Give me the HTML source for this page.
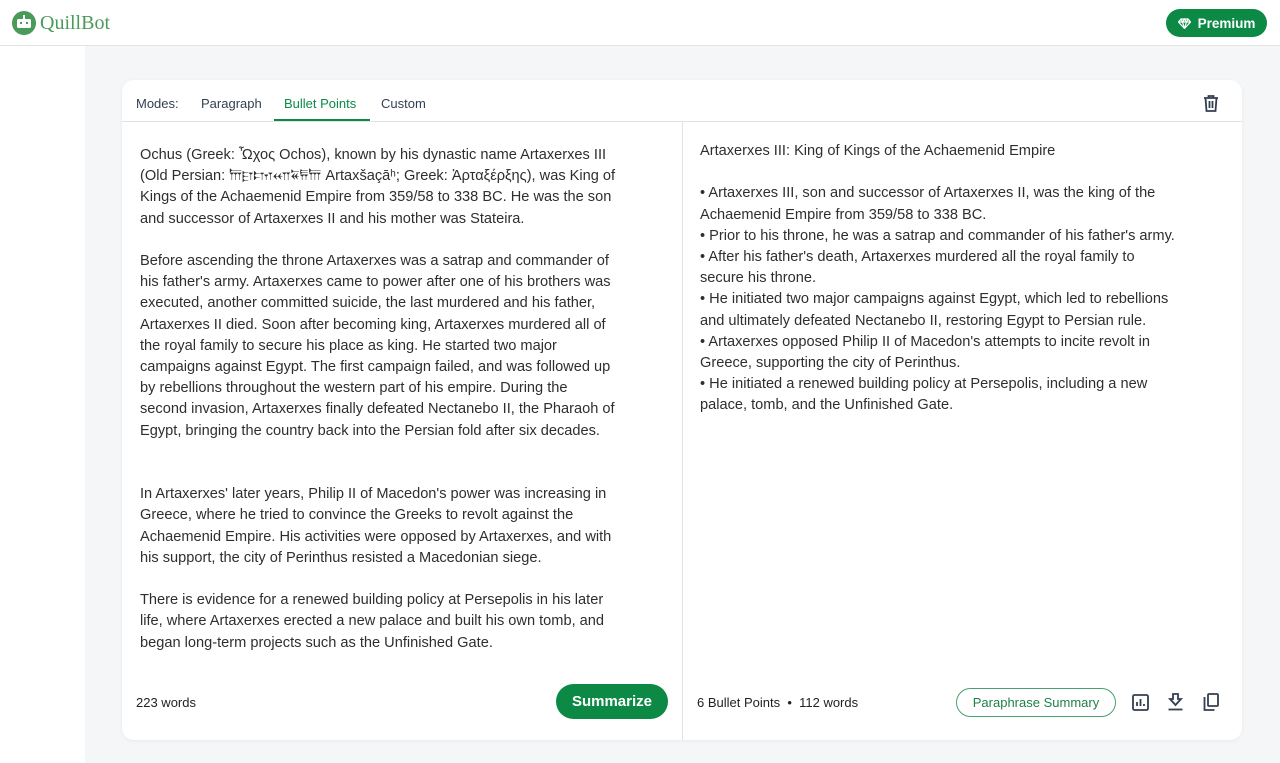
<!DOCTYPE html>
<html><head><meta charset="utf-8"><style>
*{box-sizing:border-box;margin:0;padding:0}
body{width:1280px;height:763px;overflow:hidden;background:#f5f6f7;font-family:"Liberation Sans","Noto Sans CJK SC",sans-serif;color:#2e2e2e;position:relative}
.hdr{position:absolute;left:0;top:0;width:1280px;height:46px;background:#fff;border-bottom:1px solid #e3e3e3}
.side{position:absolute;left:0;top:46px;width:85px;height:717px;background:#fff}
.logo{position:absolute;left:12px;top:11px;display:flex;align-items:center}
.logo span{font-family:"Liberation Serif",serif;font-size:20px;color:#4a9a5a;margin-left:4px}
.prem{position:absolute;left:1166px;top:9px;width:101px;height:28px;border-radius:14px;background:#0c8a45;color:#fff;font-size:13.5px;font-weight:bold;display:flex;align-items:center;justify-content:center;gap:7px}
.card{position:absolute;left:122px;top:80px;width:1120px;height:660px;background:#fff;border-radius:12px;box-shadow:0 1px 4px rgba(0,0,0,.05)}
.tabs{position:absolute;left:0;top:0;width:1120px;height:42px;border-bottom:1px solid #e3e3e3;font-size:13px;color:#333f50}
.tabs .t{position:absolute;top:16px}
.ul{position:absolute;left:152px;top:39px;width:96px;height:2px;background:#0c8a45}
.vl{position:absolute;left:560px;top:42px;width:1px;height:618px;background:#e3e3e3}
.txt{position:absolute;font-size:14.6px;line-height:21.2px;color:#2e2e2e;white-space:nowrap}
.foot{position:absolute;font-size:13px;color:#222}
.btn{position:absolute;left:434px;top:604px;width:112px;height:35px;border-radius:18px;background:#0c8a45;color:#fff;font-weight:bold;font-size:15px;display:flex;align-items:center;justify-content:center}
.pbtn{position:absolute;left:834px;top:608px;width:160px;height:29px;border-radius:15px;border:1.5px solid #4aa06f;color:#1f8048;font-size:13px;display:flex;align-items:center;justify-content:center}
</style></head><body>
<div class="hdr">
 <div class="logo"><svg width="24" height="24" viewBox="0 0 24 24"><circle cx="12" cy="12" r="12" fill="#4a9a5a"/><rect x="5" y="8" width="14" height="9" rx="1.5" fill="#fff"/><rect x="8" y="11" width="2" height="2" fill="#4a9a5a"/><rect x="14" y="11" width="2" height="2" fill="#4a9a5a"/><rect x="11" y="4" width="2" height="4" fill="#fff"/></svg><span>QuillBot</span></div>
 <div class="prem"><svg width="13" height="11" viewBox="0 0 13 11"><path d="M3 1h7l2.5 3L6.5 10.5 0.5 4z M0.5 4h12 M4.5 4l2 6.5 2-6.5 M3 1l1.5 3 2-3 2 3 1.5-3" fill="none" stroke="#fff" stroke-width="1.2"/></svg>Premium</div>
</div>
<div class="side"></div>
<div class="card">
 <div class="tabs">
  <div class="t" style="left:14px">Modes:</div>
  <div class="t" style="left:79px">Paragraph</div>
  <div class="t" style="left:162px;color:#0c8a45">Bullet Points</div>
  <div class="t" style="left:259px">Custom</div>
  <div class="ul"></div>
  <svg style="position:absolute;left:1081px;top:15px" width="16" height="17" viewBox="0 0 16 17"><path d="M1 3h14M5.5 3V1h5v2M2.5 3l1 13h9l1-13M6.5 6v7M9.5 6v7" fill="none" stroke="#333f50" stroke-width="1.8"/></svg>
 </div>
 <div class="vl"></div>
 <div class="txt" style="left:18px;top:65px">Ochus (Greek: Ὦχος Ochos), known by his dynastic name Artaxerxes III<br>(Old Persian: 𐎠𐎼𐎫𐎧𐏁𐏂𐎠 Artaxšaçāʰ; Greek: Ἀρταξέρξης), was King of<br>Kings of the Achaemenid Empire from 359/58 to 338 BC. He was the son<br>and successor of Artaxerxes II and his mother was Stateira.<br><br>Before ascending the throne Artaxerxes was a satrap and commander of<br>his father's army. Artaxerxes came to power after one of his brothers was<br>executed, another committed suicide, the last murdered and his father,<br>Artaxerxes II died. Soon after becoming king, Artaxerxes murdered all of<br>the royal family to secure his place as king. He started two major<br>campaigns against Egypt. The first campaign failed, and was followed up<br>by rebellions throughout the western part of his empire. During the<br>second invasion, Artaxerxes finally defeated Nectanebo II, the Pharaoh of<br>Egypt, bringing the country back into the Persian fold after six decades.<br><br><br>In Artaxerxes' later years, Philip II of Macedon's power was increasing in<br>Greece, where he tried to convince the Greeks to revolt against the<br>Achaemenid Empire. His activities were opposed by Artaxerxes, and with<br>his support, the city of Perinthus resisted a Macedonian siege.<br><br>There is evidence for a renewed building policy at Persepolis in his later<br>life, where Artaxerxes erected a new palace and built his own tomb, and<br>began long-term projects such as the Unfinished Gate.</div>
 <div class="txt" style="left:578px;top:61px">Artaxerxes III: King of Kings of the Achaemenid Empire<br><br>• Artaxerxes III, son and successor of Artaxerxes II, was the king of the<br>Achaemenid Empire from 359/58 to 338 BC.<br>• Prior to his throne, he was a satrap and commander of his father's army.<br>• After his father's death, Artaxerxes murdered all the royal family to<br>secure his throne.<br>• He initiated two major campaigns against Egypt, which led to rebellions<br>and ultimately defeated Nectanebo II, restoring Egypt to Persian rule.<br>• Artaxerxes opposed Philip II of Macedon's attempts to incite revolt in<br>Greece, supporting the city of Perinthus.<br>• He initiated a renewed building policy at Persepolis, including a new<br>palace, tomb, and the Unfinished Gate.</div>
 <div class="foot" style="left:14px;top:615px">223 words</div>
 <div class="btn">Summarize</div>
 <div class="foot" style="left:575px;top:615px">6 Bullet Points &nbsp;•&nbsp; 112 words</div>
 <div class="pbtn">Paraphrase Summary</div>
 <svg style="position:absolute;left:1010px;top:614px" width="17" height="17" viewBox="0 0 17 17"><rect x="1" y="1" width="15" height="15" rx="1.5" fill="none" stroke="#333f50" stroke-width="1.8"/><path d="M5 12V8M8.5 12V5M12 12v-2" stroke="#333f50" stroke-width="1.8"/></svg>
 <svg style="position:absolute;left:1045px;top:613px" width="17" height="18" viewBox="0 0 17 18"><path d="M6 1h5v5h3l-5.5 6L3 6h3z" fill="none" stroke="#333f50" stroke-width="1.8"/><path d="M1.5 16.5h14" stroke="#333f50" stroke-width="1.8"/></svg>
 <svg style="position:absolute;left:1081px;top:613px" width="16" height="18" viewBox="0 0 16 18"><rect x="5" y="1" width="10" height="12" rx="1" fill="none" stroke="#333f50" stroke-width="1.8"/><path d="M1.5 4v13h10" fill="none" stroke="#333f50" stroke-width="1.8"/></svg>
</div>
</body></html>
